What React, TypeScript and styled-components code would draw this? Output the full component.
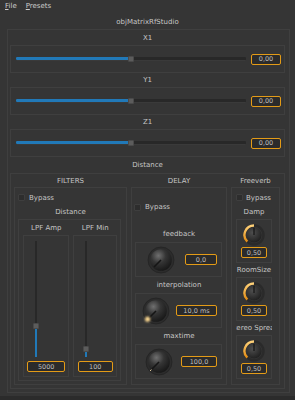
import React from 'react';
import styled, { createGlobalStyle } from 'styled-components';

const GlobalStyle = createGlobalStyle`
  html, body {
    margin: 0;
    padding: 0;
    background: #353535;
  }
  body {
    font-family: "DejaVu Sans", "Noto Sans", sans-serif;
    font-size: 7px;
    color: #c6c6c6;
  }
`;

const LINE = '#3f3f3f';
const BLUE = '#2179b8';
const ORANGE = '#e39b17';

// horizontal axis sliders
const axes = [
  { name: 'X1', value: 50, text: '0,00' },
  { name: 'Y1', value: 50, text: '0,00' },
  { name: 'Z1', value: 50, text: '0,00' },
];

const delayKnobs = [
  { name: 'feedback', text: '0,0', w: 32, glow: 'none' },
  { name: 'interpolation', text: '10,0 ms', w: 41, glow: 'big' },
  { name: 'maxtime', text: '100,0', w: 36, glow: 'tip' },
];

const reverbKnobs = ['Damp', 'RoomSize', 'Stereo Spread'];

const ArcKnob: React.FC = () => (
  <svg width="22" height="22" viewBox="0 0 22 22">
    <defs>
      <radialGradient id="ak-body" cx="40%" cy="35%" r="70%">
        <stop offset="0%" stopColor="#4e4e4e" />
        <stop offset="100%" stopColor="#1e1e1e" />
      </radialGradient>
      <linearGradient id="ak-arc" x1="0" y1="1" x2="0" y2="0">
        <stop offset="0%" stopColor="#e08a12" />
        <stop offset="100%" stopColor="#ffd27a" />
      </linearGradient>
    </defs>
    <circle cx="11" cy="11" r="9.5" fill="none" stroke="#2a2a2a" strokeWidth="2.4" />
    <path d="M4.28 17.72 A9.5 9.5 0 0 1 11 1.5" fill="none" stroke="url(#ak-arc)" strokeWidth="2.4" />
    <circle cx="11" cy="11" r="7.6" fill="url(#ak-body)" />
    <line x1="11" y1="11" x2="11" y2="3.8" stroke="#181818" strokeWidth="1.3" />
  </svg>
);

const DelayKnob: React.FC<{ glow: string }> = ({ glow }) => (
  <svg width="28" height="28" viewBox="0 0 28 28">
    <defs>
      <radialGradient id="dk-body" cx="38%" cy="30%" r="75%">
        <stop offset="0%" stopColor="#707070" />
        <stop offset="45%" stopColor="#353535" />
        <stop offset="100%" stopColor="#161616" />
      </radialGradient>
      <filter id="dk-blur" x="-1" y="-1" width="3" height="3">
        <feGaussianBlur stdDeviation="0.8" />
      </filter>
    </defs>
    <circle cx="14" cy="14" r="13" fill="#2c2c2c" stroke="#232323" strokeWidth="0.8" />
    <circle cx="14" cy="14" r="10.8" fill="url(#dk-body)" />
    <line x1="14" y1="14" x2="7" y2="21" stroke="#151515" strokeWidth="1.6" />
    {glow === 'big' && (
      <circle cx="5.6" cy="22.2" r="2.6" fill="#f7d48e" filter="url(#dk-blur)" />
    )}
    {glow === 'tip' && <line x1="6.4" y1="21.6" x2="5" y2="23" stroke="#d9c49a" strokeWidth="1" />}
  </svg>
);

const App: React.FC = () => {
  return (
    <>
      <GlobalStyle />
      <Window>
        <MenuBar>
          <MenuItem>
            <u>F</u>ile
          </MenuItem>
          <MenuItem>
            <u>P</u>resets
          </MenuItem>
        </MenuBar>
        <Title>objMatrixRfStudio</Title>
        <MainFrame>
          {axes.map((a) => (
            <React.Fragment key={a.name}>
              <RowLabel>{a.name}</RowLabel>
              <SliderBox>
                <HTrack>
                  <HFill $value={a.value} />
                  <Handle $value={a.value} />
                </HTrack>
                <ValueBox $w={30}>{a.text}</ValueBox>
              </SliderBox>
            </React.Fragment>
          ))}
          <DistanceLabel>Distance</DistanceLabel>
          <DistanceFrame>
            <Columns>
              <Column $w={113}>
                <ColumnTitle>FILTERS</ColumnTitle>
                <Frame>
                  <BypassRow $indent={3}>
                    <Checkbox />
                    Bypass
                  </BypassRow>
                  <SubLabel>Distance</SubLabel>
                  <InnerFrame>
                    <SubColumn $w={47}>
                      <SubTitle>LPF Amp</SubTitle>
                      <VSliderFrame>
                        <VSliderArea>
                          <VGroove>
                            <VFill $value={27} />
                            <VHandle $value={27} />
                          </VGroove>
                        </VSliderArea>
                        <ValueBox $w={38}>5000</ValueBox>
                      </VSliderFrame>
                    </SubColumn>
                    <SubColumn $w={44}>
                      <SubTitle>LPF Min</SubTitle>
                      <VSliderFrame>
                        <VSliderArea>
                          <VGroove>
                            <VFill $value={7} />
                            <VHandle $value={7} />
                          </VGroove>
                        </VSliderArea>
                        <ValueBox $w={35}>100</ValueBox>
                      </VSliderFrame>
                    </SubColumn>
                  </InnerFrame>
                </Frame>
              </Column>

              <Column $w={96}>
                <ColumnTitle>DELAY</ColumnTitle>
                <Frame>
                  <DelayBypass>
                    <Checkbox />
                    Bypass
                  </DelayBypass>
                  {delayKnobs.map((k) => (
                    <React.Fragment key={k.name}>
                      <KnobLabel>{k.name}</KnobLabel>
                      <KnobRow>
                        <KnobSlot>
                          <DelayKnob glow={k.glow} />
                        </KnobSlot>
                        <ValueBox $w={k.w}>{k.text}</ValueBox>
                      </KnobRow>
                    </React.Fragment>
                  ))}
                </Frame>
              </Column>

              <Column $w={49}>
                <ColumnTitle>Freeverb</ColumnTitle>
                <Frame>
                  <BypassRow $indent={4}>
                    <Checkbox $gap={3} />
                    Bypass
                  </BypassRow>
                  {reverbKnobs.map((name, i) => (
                    <React.Fragment key={name}>
                      <ReverbLabel $first={i === 0}>
                        <span>{name}</span>
                      </ReverbLabel>
                      <ReverbBox>
                        <ArcKnob />
                        <ValueBox $w={26}>0,50</ValueBox>
                      </ReverbBox>
                    </React.Fragment>
                  ))}
                </Frame>
              </Column>
            </Columns>
          </DistanceFrame>
        </MainFrame>
        <StatusBar />
      </Window>
    </>
  );
};

export default App;

// 전체 창
const Window = styled.div`
  width: 295px;
  height: 400px;
  overflow: hidden;
  display: flex;
  flex-direction: column;
`;

const MenuBar = styled.div`
  height: 12px;
  display: flex;
  align-items: center;
  gap: 9px;
  padding-left: 5px;
  line-height: 1;
`;

const MenuItem = styled.span`
  color: #cccccc;
  > u {
    text-decoration-thickness: 1px;
  }
`;

const Title = styled.div`
  height: 17px;
  padding-top: 3px;
  box-sizing: border-box;
  display: flex;
  align-items: center;
  justify-content: center;
`;

const MainFrame = styled.div`
  margin-left: 7px;
  width: 283px;
  box-sizing: border-box;
  border: 1px solid ${LINE};
  padding: 1px 4px 3px 2px;
  display: flex;
  flex-direction: column;
`;

const RowLabel = styled.div`
  height: 14px;
  display: flex;
  align-items: center;
  justify-content: center;
`;

const SliderBox = styled.div`
  height: 28px;
  box-sizing: border-box;
  border: 1px solid ${LINE};
  display: flex;
  align-items: center;
  gap: 5px;
  padding: 0 3px 0 5px;
`;

const HTrack = styled.div`
  flex: 1;
  height: 3px;
  position: relative;
  background: #282828;
  border-bottom: 1px solid #3a3a3a;
  border-radius: 1px;
`;

const HFill = styled.div<{ $value: number }>`
  width: ${(p) => p.$value}%;
  height: 100%;
  background: ${BLUE};
  border-radius: 1px;
`;

const Handle = styled.div<{ $value: number }>`
  position: absolute;
  left: ${(p) => p.$value}%;
  top: 50%;
  width: 6px;
  height: 6px;
  box-sizing: border-box;
  transform: translate(-50%, -50%);
  background: #5c5c5c;
  border: 1px solid #4a4a4a;
  border-radius: 1px;
`;

const ValueBox = styled.div<{ $w: number }>`
  width: ${(p) => p.$w}px;
  height: 11px;
  flex: none;
  box-sizing: border-box;
  border: 1px solid ${ORANGE};
  border-radius: 2px;
  background: #2b2b2b;
  color: #bdbdbd;
  font-size: 6.5px;
  display: flex;
  align-items: center;
  justify-content: center;
  align-self: center;
`;

const DistanceLabel = styled.div`
  height: 16px;
  display: flex;
  align-items: center;
  justify-content: center;
`;

const DistanceFrame = styled.div`
  height: 216px;
  box-sizing: border-box;
  border: 1px solid ${LINE};
  padding: 0 2px 3px 3px;
  display: flex;
  flex-direction: column;
`;

const Columns = styled.div`
  flex: 1;
  display: flex;
  gap: 4px;
`;

const Column = styled.div<{ $w: number }>`
  width: ${(p) => p.$w}px;
  display: flex;
  flex-direction: column;
`;

const ColumnTitle = styled.div`
  height: 13px;
  display: flex;
  align-items: center;
  justify-content: center;
`;

const Frame = styled.div`
  flex: 1;
  border: 1px solid ${LINE};
  display: flex;
  flex-direction: column;
`;

const BypassRow = styled.div<{ $indent: number }>`
  height: 7px;
  margin-top: 6px;
  padding-left: ${(p) => p.$indent}px;
  display: flex;
  align-items: center;
`;

const Checkbox = styled.span<{ $gap?: number }>`
  width: 7px;
  height: 7px;
  box-sizing: border-box;
  border: 1px solid #3e3e3e;
  background: #2d2d2d;
  border-radius: 1px;
  margin-right: ${(p) => p.$gap ?? 4}px;
`;

const SubLabel = styled.div`
  height: 14px;
  margin-top: 4px;
  display: flex;
  align-items: center;
  justify-content: center;
`;

const InnerFrame = styled.div`
  flex: 1;
  margin: 0 5px 3px 3px;
  border: 1px solid ${LINE};
  padding: 1px 3px 3px 4px;
  display: flex;
  gap: 4px;
`;

const SubColumn = styled.div<{ $w: number }>`
  width: ${(p) => p.$w}px;
  display: flex;
  flex-direction: column;
`;

const SubTitle = styled.div`
  height: 14px;
  display: flex;
  align-items: center;
  justify-content: center;
`;

const VSliderFrame = styled.div`
  flex: 1;
  border: 1px solid ${LINE};
  padding: 5px 0 4px;
  display: flex;
  flex-direction: column;
  gap: 4px;
`;

const VSliderArea = styled.div`
  flex: 1;
  padding-left: 11px;
  display: flex;
`;

const VGroove = styled.div`
  width: 2px;
  position: relative;
  background: #282828;
  display: flex;
  flex-direction: column;
  justify-content: flex-end;
`;

const VFill = styled.div<{ $value: number }>`
  height: ${(p) => p.$value}%;
  background: ${BLUE};
`;

const VHandle = styled.div<{ $value: number }>`
  position: absolute;
  left: 50%;
  bottom: ${(p) => p.$value}%;
  width: 6px;
  height: 6px;
  box-sizing: border-box;
  transform: translate(-50%, 50%);
  background: #5c5c5c;
  border: 1px solid #4a4a4a;
  border-radius: 1px;
`;

const DelayBypass = styled.div`
  height: 38px;
  padding-left: 2px;
  display: flex;
  align-items: center;
`;

const KnobLabel = styled.div`
  height: 16px;
  display: flex;
  align-items: center;
  justify-content: center;
`;

const KnobRow = styled.div`
  height: 35px;
  box-sizing: border-box;
  margin: 0 4px 0 3px;
  border: 1px solid ${LINE};
  padding-right: 4px;
  display: flex;
  align-items: center;
`;

const KnobSlot = styled.div`
  flex: 1;
  display: flex;
  justify-content: center;
`;

const ReverbLabel = styled.div<{ $first: boolean }>`
  width: 36px;
  height: 14px;
  margin: ${(p) => (p.$first ? 4 : 0)}px 0 0 4px;
  overflow: hidden;
  white-space: nowrap;
  display: flex;
  align-items: center;
  justify-content: center;
  > span {
    flex: none;
  }
`;

const ReverbBox = styled.div`
  width: 36px;
  height: 44px;
  box-sizing: border-box;
  margin-left: 4px;
  border: 1px solid ${LINE};
  padding-top: 4px;
  display: flex;
  flex-direction: column;
  align-items: center;
  gap: 1px;
`;

const StatusBar = styled.div`
  margin-top: auto;
  height: 4px;
  background: #2b2b2b;
`;
